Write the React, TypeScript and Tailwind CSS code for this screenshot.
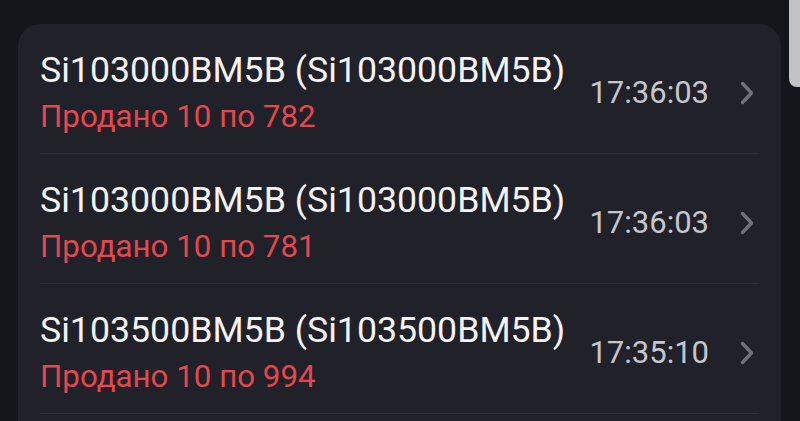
import React from "react";

interface Trade {
  title: string;
  info: string;
  time: string;
}

const trades: Trade[] = [
  { title: "Si103000BM5B (Si103000BM5B)", info: "Продано 10 по 782", time: "17:36:03" },
  { title: "Si103000BM5B (Si103000BM5B)", info: "Продано 10 по 781", time: "17:36:03" },
  { title: "Si103500BM5B (Si103500BM5B)", info: "Продано 10 по 994", time: "17:35:10" },
];

const Chevron = () => (
  <svg width="16" height="26" viewBox="0 0 16 26" fill="none" className="ml-[30px] shrink-0">
    <path
      d="M3.5 3.5 L12.5 13 L3.5 22.5"
      stroke="#71717e"
      strokeWidth="3.4"
      strokeLinecap="round"
      strokeLinejoin="round"
    />
  </svg>
);

const TradeRow: React.FC<{ trade: Trade }> = ({ trade }) => (
  <div className="mx-[22px] flex items-center border-b border-[#2e2e37] pt-[24px] pb-[16px]">
    <div className="flex-1 min-w-0">
      <div className="text-[35.7px] leading-[44px] text-[#f3f3f5] whitespace-nowrap">{trade.title}</div>
      <div className="mt-[5px] text-[31.3px] leading-[40px] text-[#e2484d] whitespace-nowrap">{trade.info}</div>
    </div>
    <div className="text-[31px] leading-[40px] text-[#c6c6ce] whitespace-nowrap">{trade.time}</div>
    <Chevron />
    <div className="w-[4px] shrink-0" />
  </div>
);

export default function App() {
  return (
    <div
      className="relative w-[800px] h-[421px] overflow-hidden bg-[#15151c]"
      style={{ fontFamily: "Roboto, 'Noto Sans', sans-serif" }}
    >
      <div className="absolute right-0 top-0 w-[11px] h-[87px] rounded-bl-[8px] bg-[#c3c3c6]" />
      <div className="pt-[24px] pl-[18px] pr-[19px]">
        <div className="rounded-t-[22px] bg-[#212129] h-[420px]">
          {trades.map((t, i) => (
            <TradeRow key={i} trade={t} />
          ))}
        </div>
      </div>
    </div>
  );
}
